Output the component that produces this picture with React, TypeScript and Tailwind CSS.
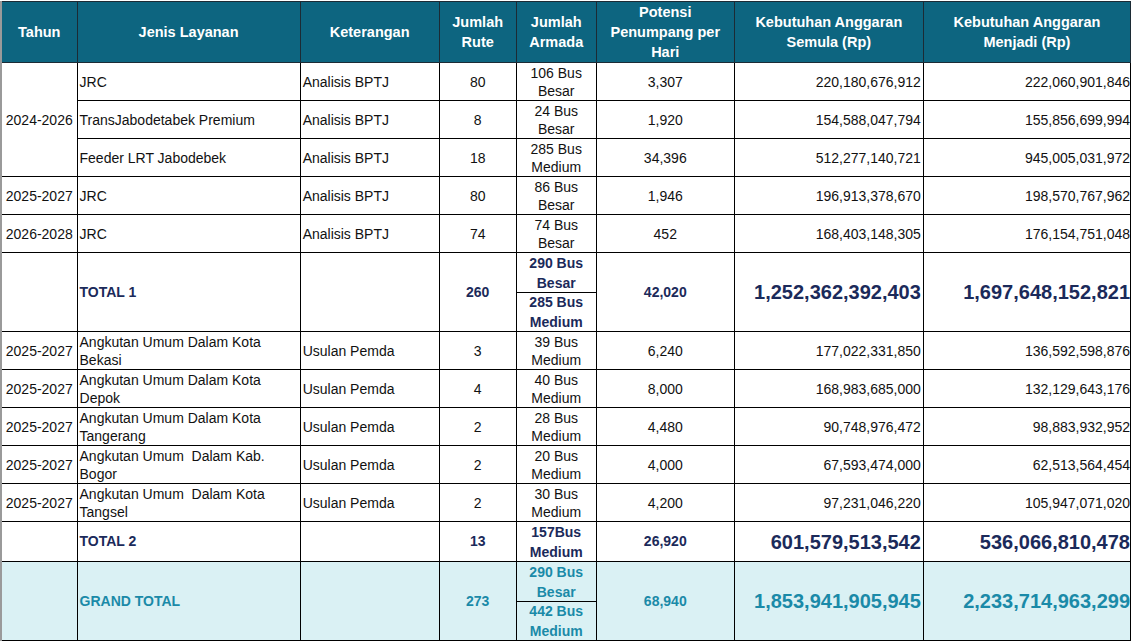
import React from 'react';

interface Row {
  tahun?: string;
  span?: number;
  jenis: string;
  ket: string;
  rute: string;
  armada: string;
  potensi: string;
  semula: string;
  menjadi: string;
}

const group1: Row[] = [
  { tahun: '2024-2026', span: 3, jenis: 'JRC', ket: 'Analisis BPTJ', rute: '80', armada: '106 Bus Besar', potensi: '3,307', semula: '220,180,676,912', menjadi: '222,060,901,846' },
  { jenis: 'TransJabodetabek Premium', ket: 'Analisis BPTJ', rute: '8', armada: '24 Bus Besar', potensi: '1,920', semula: '154,588,047,794', menjadi: '155,856,699,994' },
  { jenis: 'Feeder LRT Jabodebek', ket: 'Analisis BPTJ', rute: '18', armada: '285 Bus Medium', potensi: '34,396', semula: '512,277,140,721', menjadi: '945,005,031,972' },
  { tahun: '2025-2027', jenis: 'JRC', ket: 'Analisis BPTJ', rute: '80', armada: '86 Bus Besar', potensi: '1,946', semula: '196,913,378,670', menjadi: '198,570,767,962' },
  { tahun: '2026-2028', jenis: 'JRC', ket: 'Analisis BPTJ', rute: '74', armada: '74 Bus Besar', potensi: '452', semula: '168,403,148,305', menjadi: '176,154,751,048' },
];

const group2: Row[] = [
  { tahun: '2025-2027', jenis: 'Angkutan Umum Dalam Kota Bekasi', ket: 'Usulan Pemda', rute: '3', armada: '39 Bus Medium', potensi: '6,240', semula: '177,022,331,850', menjadi: '136,592,598,876' },
  { tahun: '2025-2027', jenis: 'Angkutan Umum Dalam Kota Depok', ket: 'Usulan Pemda', rute: '4', armada: '40 Bus Medium', potensi: '8,000', semula: '168,983,685,000', menjadi: '132,129,643,176' },
  { tahun: '2025-2027', jenis: 'Angkutan Umum Dalam Kota Tangerang', ket: 'Usulan Pemda', rute: '2', armada: '28 Bus Medium', potensi: '4,480', semula: '90,748,976,472', menjadi: '98,883,932,952' },
  { tahun: '2025-2027', jenis: 'Angkutan Umum  Dalam Kab. Bogor', ket: 'Usulan Pemda', rute: '2', armada: '20 Bus Medium', potensi: '4,000', semula: '67,593,474,000', menjadi: '62,513,564,454' },
  { tahun: '2025-2027', jenis: 'Angkutan Umum  Dalam Kota Tangsel', ket: 'Usulan Pemda', rute: '2', armada: '30 Bus Medium', potensi: '4,200', semula: '97,231,046,220', menjadi: '105,947,071,020' },
];

const td = 'border border-black h-[38px] p-0 align-middle leading-[18px]';

const DataRow = ({ r }: { r: Row }) => (
  <tr>
    {r.tahun !== undefined && (
      <td rowSpan={r.span ?? 1} className={`${td} text-center`}>{r.tahun}</td>
    )}
    <td className={`${td} pl-[2px] whitespace-pre-wrap`}>{r.jenis}</td>
    <td className={`${td} pl-[2px]`}>{r.ket}</td>
    <td className={`${td} text-center`}>{r.rute}</td>
    <td className={`${td} text-center px-[6px]`}>{r.armada}</td>
    <td className={`${td} text-center`}>{r.potensi}</td>
    <td className={`${td} text-right pr-[2px]`}>{r.semula}</td>
    <td className={`${td} text-right`}>{r.menjadi}</td>
  </tr>
);

interface TotalProps {
  label: string;
  rute: string;
  armada: string[];
  potensi: string;
  semula: string;
  menjadi: string;
  grand?: boolean;
  tall?: boolean;
}

const TotalRow = ({ label, rute, armada, potensi, semula, menjadi, grand, tall }: TotalProps) => {
  const color = grand ? 'text-[#1a8aa8]' : 'text-[#1b2a5a]';
  const h = tall ? 'h-[79px]' : 'h-[40px]';
  const c = `border border-black p-0 align-middle font-bold ${h} ${color}`;
  return (
    <tr className={grand ? 'bg-[#daf1f4]' : ''}>
      <td className={c}></td>
      <td className={`${c} pl-[2px]`}>{label}</td>
      <td className={c}></td>
      <td className={`${c} text-center`}>{rute}</td>
      <td className={`${c} text-center`}>
        {armada.map((a, i) => (
          <div
            key={i}
            className={`flex items-center justify-center px-[8px] leading-[20px] h-[39px] ${i > 0 ? 'border-t border-black' : ''}`}
          >
            {a}
          </div>
        ))}
      </td>
      <td className={`${c} text-center`}>{potensi}</td>
      <td className={`${c} text-right pr-[2px] text-[20px]`}>{semula}</td>
      <td className={`${c} text-right text-[20px]`}>{menjadi}</td>
    </tr>
  );
};

export default function App() {
  return (
    <div className="w-[1132px] h-[642px] bg-white pt-[1px] font-['Liberation_Sans',Arial,sans-serif] text-[14px] text-[#111]">
      <table className="table-fixed border-collapse w-[1131px] border-l-2 border-l-[#9a9a9a]">
        <colgroup>
          <col className="w-[76px]" />
          <col className="w-[223px]" />
          <col className="w-[139px]" />
          <col className="w-[77px]" />
          <col className="w-[80px]" />
          <col className="w-[138px]" />
          <col className="w-[189px]" />
          <col className="w-[207px]" />
        </colgroup>
        <thead>
          <tr className="bg-[#0d6580] text-white font-bold text-[14.5px] leading-[20px]">
            <th className="border border-[#1c2b35] h-[59px] font-bold">Tahun</th>
            <th className="border border-[#1c2b35] font-bold">Jenis Layanan</th>
            <th className="border border-[#1c2b35] font-bold">Keterangan</th>
            <th className="border border-[#1c2b35] font-bold">Jumlah<br />Rute</th>
            <th className="border border-[#1c2b35] font-bold">Jumlah<br />Armada</th>
            <th className="border border-[#1c2b35] font-bold">Potensi<br />Penumpang per<br />Hari</th>
            <th className="border border-[#1c2b35] font-bold">Kebutuhan Anggaran<br />Semula (Rp)</th>
            <th className="border border-[#1c2b35] font-bold">Kebutuhan Anggaran<br />Menjadi (Rp)</th>
          </tr>
        </thead>
        <tbody>
          {group1.map((r, i) => (
            <DataRow key={i} r={r} />
          ))}
          <TotalRow
            label="TOTAL 1"
            rute="260"
            armada={['290 Bus Besar', '285 Bus Medium']}
            potensi="42,020"
            semula="1,252,362,392,403"
            menjadi="1,697,648,152,821"
            tall
          />
          {group2.map((r, i) => (
            <DataRow key={i} r={r} />
          ))}
          <TotalRow
            label="TOTAL 2"
            rute="13"
            armada={['157Bus Medium']}
            potensi="26,920"
            semula="601,579,513,542"
            menjadi="536,066,810,478"
          />
          <TotalRow
            label="GRAND TOTAL"
            rute="273"
            armada={['290 Bus Besar', '442 Bus Medium']}
            potensi="68,940"
            semula="1,853,941,905,945"
            menjadi="2,233,714,963,299"
            grand
            tall
          />
        </tbody>
      </table>
    </div>
  );
}
